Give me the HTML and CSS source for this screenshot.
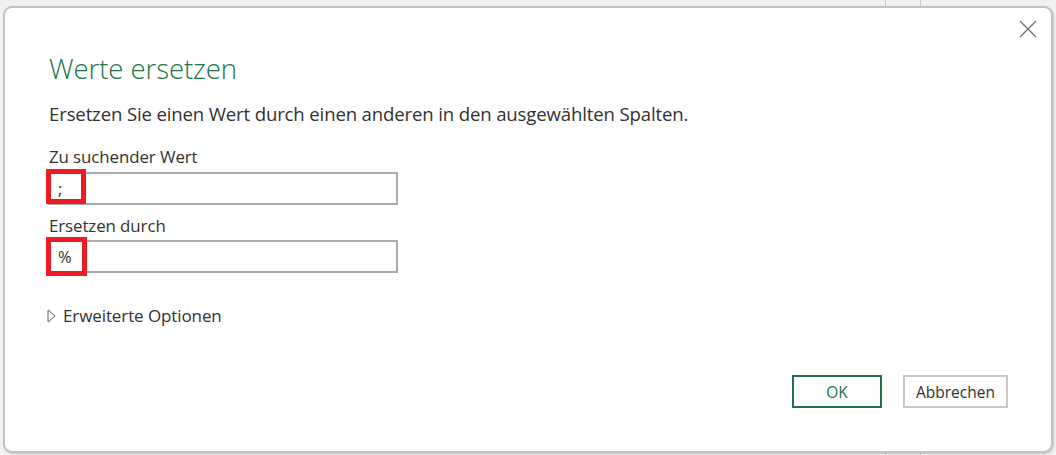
FILE: index.html
```html
<!DOCTYPE html>
<html lang="de">
<head>
<meta charset="utf-8">
<title>Werte ersetzen</title>
<link rel="stylesheet" href="styles.css">
</head>
<body>
<div class="dialog">
  <button class="close" aria-label="Schließen">
    <svg width="18" height="18" viewBox="0 0 18 18"><path d="M1 1 L17 17 M17 1 L1 17" stroke="#6a6a6a" stroke-width="1.2" fill="none"/></svg>
  </button>
  <h1 class="title">Werte ersetzen</h1>
  <p class="desc">Ersetzen Sie einen Wert durch einen anderen in den ausgewählten Spalten.</p>
  <div class="field field-first">
    <div class="label">Zu suchender Wert</div>
    <div class="input"><span class="value">;</span><span class="mark"></span></div>
  </div>
  <div class="field field-second">
    <div class="label">Ersetzen durch</div>
    <div class="input"><span class="value">%</span><span class="mark mark-tall"></span></div>
  </div>
  <div class="advanced">
    <svg class="tri" width="9" height="14" viewBox="0 0 9 14"><path d="M1 1 L8 7 L1 13 Z" stroke="#606060" stroke-width="1" fill="none" stroke-linejoin="miter"/></svg>
    <span>Erweiterte Optionen</span>
  </div>
  <div class="footer">
    <button class="btn btn-ok">OK</button>
    <button class="btn btn-cancel">Abbrechen</button>
  </div>
</div>
</body>
</html>
```

FILE: styles.css
```css
html, body {
  margin: 0;
  padding: 0;
}
body {
  width: 1056px;
  height: 455px;
  overflow: hidden;
  background-color: #f1f1f1;
  background-image:
    linear-gradient(to right, transparent 885px, #c8c8c8 885px, #c8c8c8 886px, transparent 886px, transparent 920px, #c8c8c8 920px, #c8c8c8 921px, transparent 921px);
  font-family: "Open Sans", "Noto Sans", "Liberation Sans", sans-serif;
  color: #323130;
}
.dialog {
  position: relative;
  box-sizing: border-box;
  margin: 6px 0 0 3px;
  width: 1050px;
  height: 447px;
  background: #fff;
  border: 2px solid #c2c2c2;
  border-radius: 9px;
  box-shadow: 1px 1px 2px rgba(0,0,0,0.18);
  padding: 42px 43px 0 44px;
  display: flex;
  flex-direction: column;
}
.close {
  position: absolute;
  top: 11px;
  right: 13px;
  width: 20px;
  height: 20px;
  padding: 1px;
  border: 0;
  background: transparent;
}
.close svg { display: block; }
.title {
  margin: 0;
  font-size: 27.6px;
  font-weight: 300;
  line-height: 36px;
  color: #217346;
  letter-spacing: -0.1px;
}
.desc {
  margin: 16px 0 0 0;
  font-size: 18.6px;
  line-height: 24px;
  letter-spacing: -0.15px;
}
.label {
  font-size: 16.9px;
  line-height: 24px;
  letter-spacing: -0.1px;
}
.field-first {
  margin-top: 19px;
}
.field-first .input {
  margin-top: 3px;
}
.field-second {
  margin-top: 9px;
}
.field-second .input {
  margin-top: 2px;
}
.input {
  position: relative;
  box-sizing: border-box;
  margin-left: -1px;
  width: 350px;
  height: 33px;
  border: 2px solid #ababab;
  padding-left: 8px;
  font-size: 16.5px;
  line-height: 29px;
  background: #fff;
}
.mark {
  position: absolute;
  box-sizing: border-box;
  left: -4px;
  top: -5px;
  width: 40px;
  height: 35px;
  border: 5px solid #ed1c24;
}
.mark-tall {
  width: 41px;
  height: 39px;
}
.advanced {
  margin-top: 32px;
  margin-left: -2px;
  display: flex;
  align-items: center;
  gap: 7px;
  font-size: 17px;
  line-height: 22px;
  letter-spacing: -0.1px;
}
.tri { display: block; }
.footer {
  margin-top: auto;
  margin-bottom: 43px;
  display: flex;
  justify-content: flex-end;
  gap: 21px;
}
.btn {
  box-sizing: border-box;
  height: 33px;
  background: #fff;
  font-family: inherit;
  font-size: 15.5px;
  padding: 0;
}
.btn-ok {
  width: 90px;
  border: 2px solid #217346;
  color: #217346;
}
.btn-cancel {
  width: 105px;
  border: 2px solid #c8c8c8;
  color: #323130;
}
```
